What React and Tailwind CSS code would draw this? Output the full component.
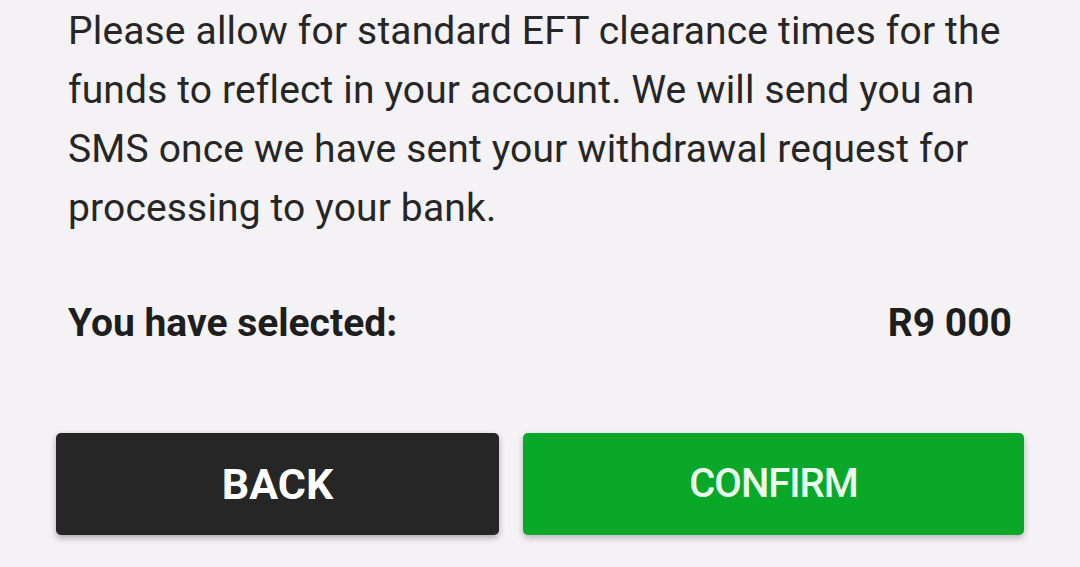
export default function App() {
  return (
    <div
      className="w-[1080px] h-[567px] overflow-hidden bg-[#f4f2f5] px-[68px]"
      style={{ fontFamily: 'Roboto, "Noto Sans", sans-serif' }}
    >
      <p className="pt-[2px] text-[39px] leading-[59px] tracking-[0.15px] text-[#262626]">
        Please allow for standard EFT clearance times for the funds to reflect in your account. We will send you an SMS once we have sent your withdrawal request for processing to your bank.
      </p>

      <div className="mt-[63px] flex items-center justify-between text-[39px] font-bold leading-[44px] tracking-[0px] text-[#1e1e1e]">
        <span>You have selected:</span>
        <span>R9 000</span>
      </div>

      <div className="mt-[88px] -mx-[12px] flex gap-[24px]">
        <button className="w-[443px] h-[102px] rounded-[5px] bg-[#262626] text-white text-[43px] font-bold tracking-[0px] shadow-[0_3px_6px_rgba(0,0,0,0.3)]">
          BACK
        </button>
        <button className="w-[501px] h-[102px] rounded-[5px] bg-[#0aa828] text-[#eafcec] text-[40px] font-medium tracking-[-1px] shadow-[0_3px_6px_rgba(0,0,0,0.25)]">
          CONFIRM
        </button>
      </div>
    </div>
  );
}
